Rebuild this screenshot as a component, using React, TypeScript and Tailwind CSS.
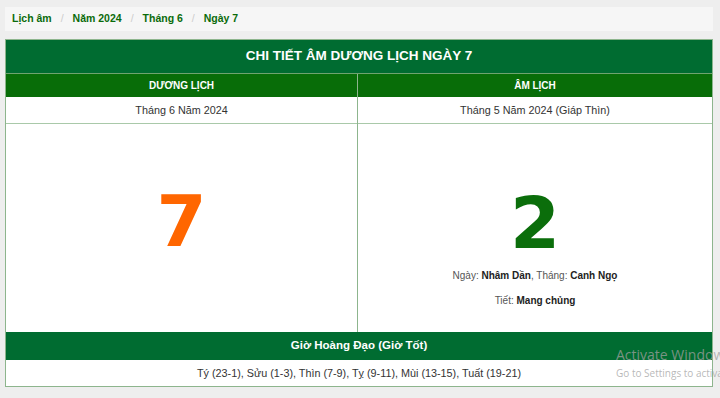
import React from "react";

const crumbs = ["Lịch âm", "Năm 2024", "Tháng 6", "Ngày 7"];

export default function App() {
  return (
    <div className="relative min-h-[398px] w-[720px] overflow-hidden bg-[#eeeeee] px-[5px] pt-[7px] font-['Liberation_Sans',Arial,sans-serif]">
      {/* breadcrumb */}
      <div className="flex h-[24px] w-[708px] items-center bg-[#f6f6f6] pl-[7px] text-[10.5px] font-bold text-[#0b6b0b]">
        {crumbs.map((c, i) => (
          <span key={i} className="flex items-center">
            {i > 0 && <span className="px-[9px] font-normal text-[#cccccc]">/</span>}
            {c}
          </span>
        ))}
      </div>

      {/* main box */}
      <div className="mt-[8px] w-[708px] border border-[#8db58d] bg-white">
        <div className="flex h-[33px] items-center justify-center bg-[#006c31] text-[13.5px] font-bold text-white">
          CHI TIẾT ÂM DƯƠNG LỊCH NGÀY 7
        </div>
        <div className="grid grid-cols-[352px_1fr] border-t border-[#6fa36f]">
          {/* left column */}
          <div className="flex flex-col border-r border-[#8db58d]">
            <div className="flex h-[23px] items-center justify-center bg-[#086d08] text-[10px] font-bold text-white">
              DƯƠNG LỊCH
            </div>
            <div className="flex h-[27px] items-center justify-center border-b border-[#a9c9a9] text-[10.8px] text-[#333333]">
              Tháng 6 Năm 2024
            </div>
            <div className="flex h-[208px] items-start justify-center pt-[61px]">
              <span className="font-['DejaVu_Sans',Verdana,sans-serif] text-[72px] font-bold leading-[72px] text-[#ff6600]">
                7
              </span>
            </div>
          </div>
          {/* right column */}
          <div className="flex flex-col">
            <div className="flex h-[23px] items-center justify-center bg-[#086d08] text-[10px] font-bold text-white">
              ÂM LỊCH
            </div>
            <div className="flex h-[27px] items-center justify-center border-b border-[#a9c9a9] text-[10.8px] text-[#333333]">
              Tháng 5 Năm 2024 (Giáp Thìn)
            </div>
            <div className="flex h-[208px] flex-col items-center pt-[63px]">
              <span className="font-['DejaVu_Sans',Verdana,sans-serif] text-[72px] font-bold leading-[72px] text-[#0b6e0b]">
                2
              </span>
              <p className="mt-[11px] text-[10px] leading-[12px] text-[#555555]">
                Ngày: <b className="text-[#222222]">Nhâm Dần</b>, Tháng: <b className="text-[#222222]">Canh Ngọ</b>
              </p>
              <p className="mt-[13px] text-[10px] leading-[12px] text-[#555555]">
                Tiết: <b className="text-[#222222]">Mang chủng</b>
              </p>
            </div>
          </div>
        </div>
        <div className="flex h-[28px] items-center justify-center bg-[#006c31] text-[11.5px] font-bold text-white">
          Giờ Hoàng Đạo (Giờ Tốt)
        </div>
        <div className="flex h-[26px] items-center justify-center text-[10.8px] text-[#333333]">
          Tý (23-1), Sửu (1-3), Thìn (7-9), Tỵ (9-11), Mùi (13-15), Tuất (19-21)
        </div>
      </div>

      {/* windows watermark overlay */}
      <div className="pointer-events-none absolute left-[616px] top-[346px] whitespace-nowrap font-['Open_Sans',sans-serif] text-[rgba(160,160,160,0.75)]">
        <div className="text-[14px] leading-[18px]">Activate Windows</div>
        <div className="mt-[2px] text-[10px] leading-[14px]">Go to Settings to activate Windows.</div>
      </div>
    </div>
  );
}
